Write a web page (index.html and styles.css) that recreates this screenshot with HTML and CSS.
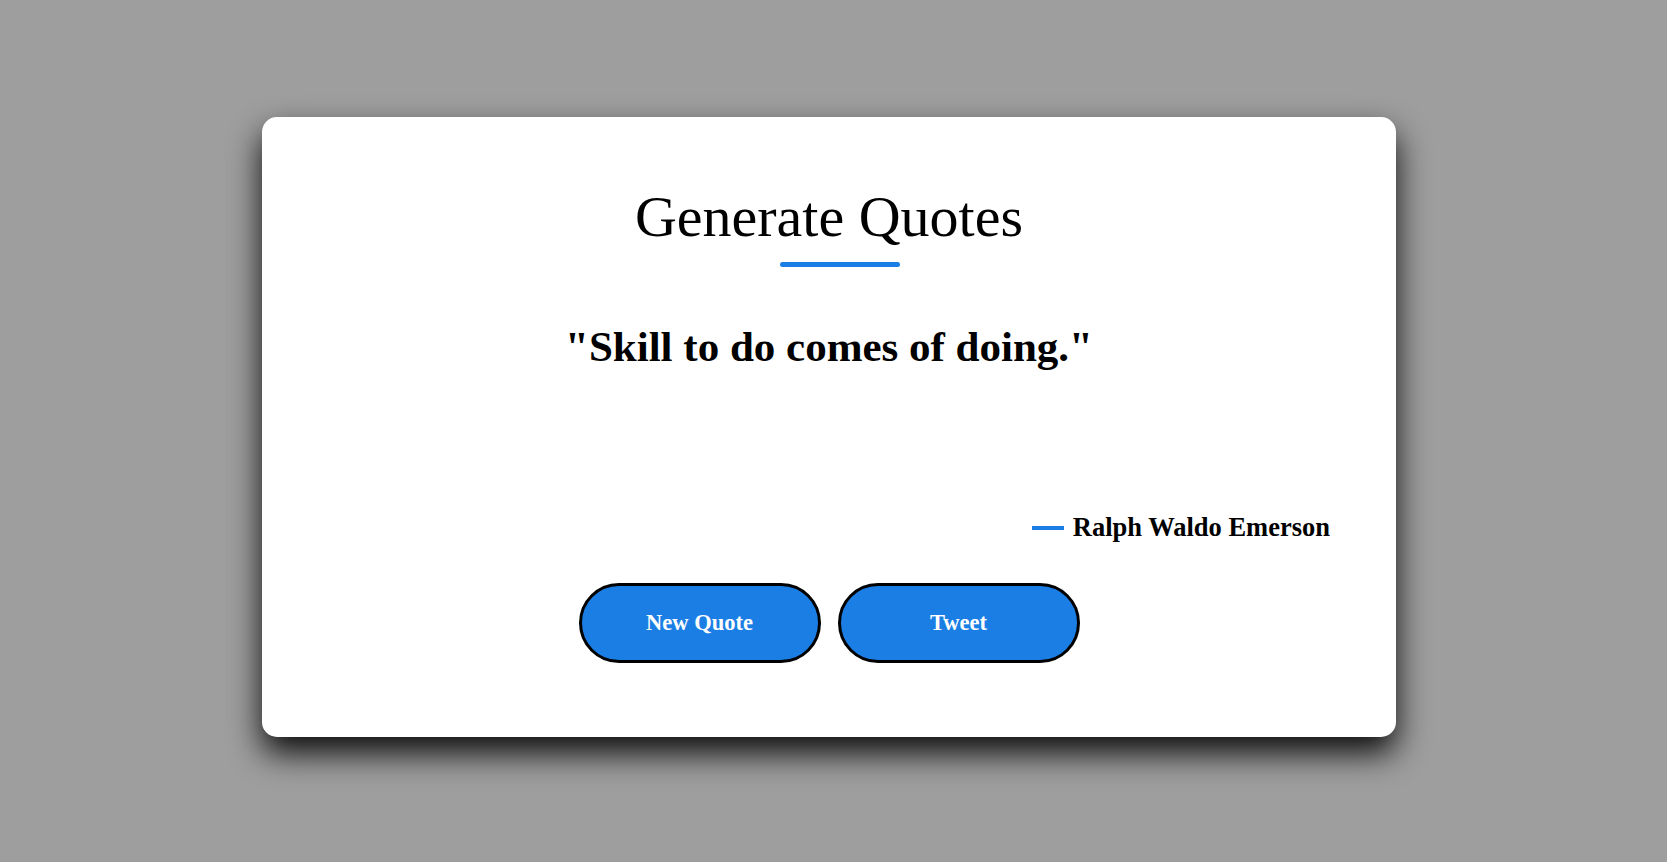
FILE: index.html
```html
<!DOCTYPE html>
<html lang="en">
<head>
<meta charset="utf-8">
<title>Generate Quotes</title>
<link rel="stylesheet" href="styles.css">
</head>
<body>
<main class="card">
  <h1 class="title">Generate Quotes</h1>
  <div class="title-bar"></div>
  <p class="quote">"Skill to do comes of doing."</p>
  <div class="author"><span class="dash"></span><span class="author-name">Ralph Waldo Emerson</span></div>
  <div class="actions">
    <button class="btn">New Quote</button>
    <button class="btn">Tweet</button>
  </div>
</main>
</body>
</html>
```
FILE: styles.css
```css
html, body {
  margin: 0;
  padding: 0;
}
body {
  background: #9e9e9e;
  font-family: "Liberation Serif", "Times New Roman", serif;
  color: #000;
  padding-top: 117px;
  height: 862px;
  box-sizing: border-box;
  overflow: hidden;
}
.card {
  width: 1134px;
  height: 620px;
  box-sizing: border-box;
  margin-left: 262px;
  background: #fff;
  border-radius: 15px;
  box-shadow: 0 16px 32px rgba(0, 0, 0, 0.92);
  padding: 71.4px 66px 73px 66px;
  display: flex;
  flex-direction: column;
  align-items: center;
}
.title {
  margin: 0;
  font-size: 58px;
  line-height: 58px;
  font-weight: 400;
  text-align: center;
}
.title-bar {
  width: 120px;
  height: 5px;
  border-radius: 3px;
  background: #1b7ee5;
  margin-top: 15.9px;
  margin-left: 21px;
}
.quote {
  margin: 57.4px 0 0 0;
  font-size: 43px;
  line-height: 43px;
  font-weight: 700;
  text-align: center;
}
.author {
  align-self: flex-end;
  margin-top: 146.8px;
  display: flex;
  align-items: center;
  gap: 9px;
  height: 26.5px;
}
.dash {
  width: 32px;
  height: 4px;
  background: #1b7ee5;
  margin-top: 1px;
}
.author-name {
  font-size: 26.5px;
  line-height: 26.5px;
  font-weight: 700;
}
.actions {
  margin-top: 42.3px;
  display: flex;
  gap: 17px;
}
.btn {
  width: 242px;
  height: 80px;
  box-sizing: border-box;
  border: 3px solid #000;
  border-radius: 40px;
  background: #1b7ee5;
  color: #fff;
  font-family: "Liberation Serif", "Times New Roman", serif;
  font-size: 22.5px;
  font-weight: 700;
  cursor: pointer;
}
```
